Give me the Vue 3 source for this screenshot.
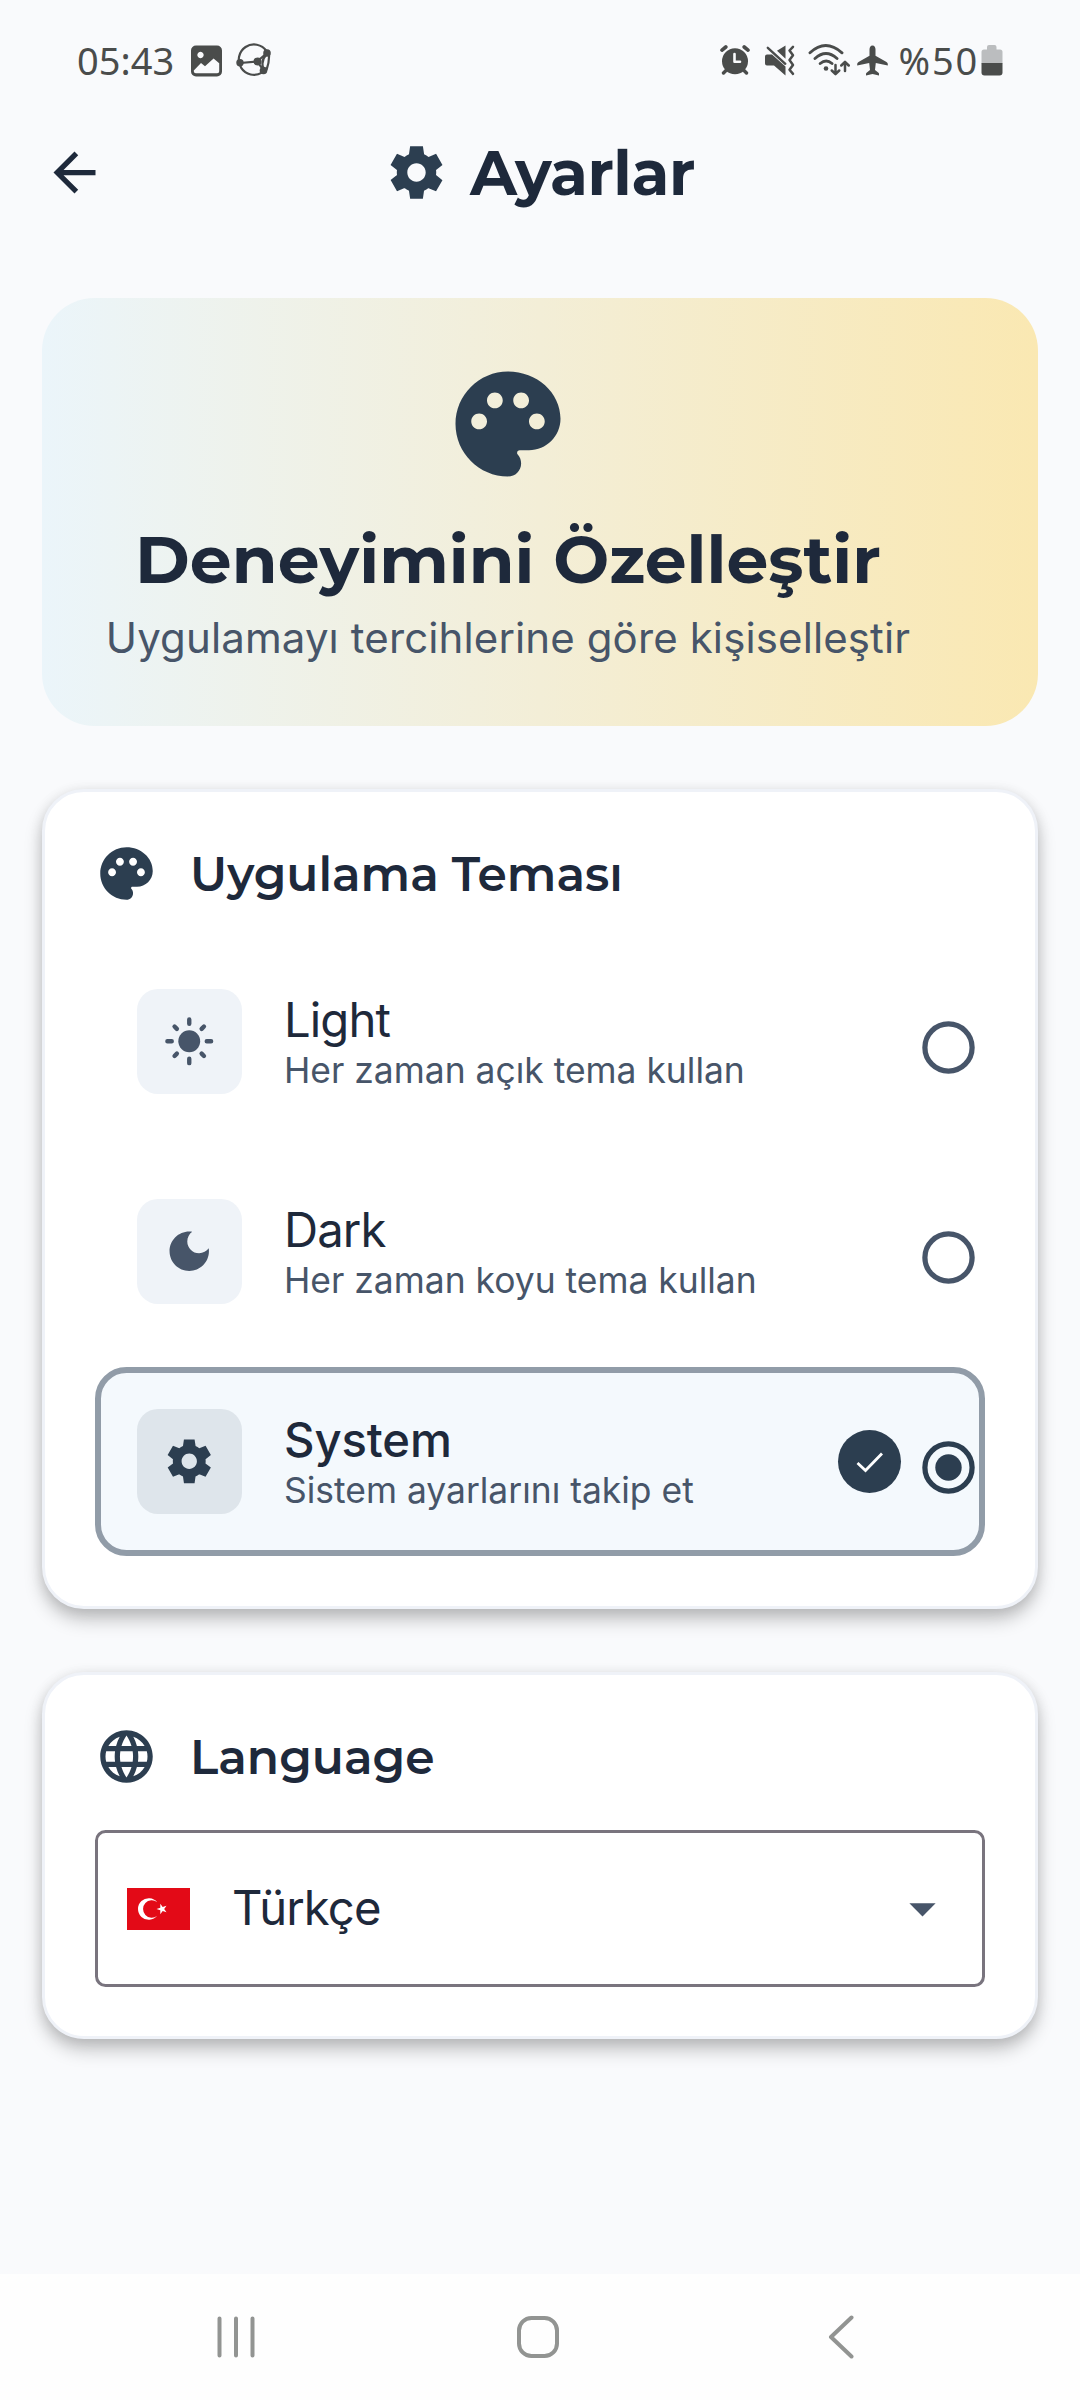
<script setup>
import { ref } from 'vue'

const selected = ref('system')
const themes = [
  { id: 'light', title: 'Light', text: 'Her zaman açık tema kullan' },
  { id: 'dark', title: 'Dark', text: 'Her zaman koyu tema kullan' },
  { id: 'system', title: 'System', text: 'Sistem ayarlarını takip et' },
]

const gear =
  'M19.44 12.99l-.01.02c.04-.33.08-.67.08-1.01 0-.34-.03-.66-.07-.99l.01.02 2.44-1.92-2.43-4.22-2.87 1.16.01.01c-.52-.4-1.09-.74-1.71-1h.01L14.44 2H9.57l-.44 3.07h.01c-.62.26-1.19.6-1.71 1l.01-.01-2.88-1.17-2.44 4.22 2.44 1.92.01-.02c-.04.33-.07.65-.07.99 0 .34.03.68.08 1.01l-.01-.02-2.43 1.91 2.43 4.2 2.88-1.15-.02-.04c.53.41 1.1.75 1.73 1.01h-.03L9.58 22h4.85l.44-3.07h-.01c.62-.26 1.2-.6 1.73-1.01l-.02.04 2.88 1.15 2.43-4.2-2.44-1.92zM12 15.5c-1.93 0-3.5-1.57-3.5-3.5s1.57-3.5 3.5-3.5 3.5 1.57 3.5 3.5-1.57 3.5-3.5 3.5z'
const palette =
  'M12 2C6.49 2 2 6.49 2 12s4.49 10 10 10c1.38 0 2.5-1.12 2.5-2.5 0-.61-.23-1.2-.64-1.67-.08-.1-.13-.21-.13-.33 0-.28.22-.5.5-.5H16c3.31 0 6-2.69 6-6 0-4.96-4.49-9-10-9zM17.5 13c-.83 0-1.5-.67-1.5-1.5s.67-1.5 1.5-1.5 1.5.67 1.5 1.5-.67 1.5-1.5 1.5zm-3-4c-.83 0-1.5-.67-1.5-1.5S13.67 6 14.5 6s1.5.67 1.5 1.5S15.33 9 14.5 9zM5 11.5c0-.83.67-1.5 1.5-1.5S8 10.67 8 11.5 7.33 13 6.5 13 5 12.33 5 11.5zm6-4C11 8.33 10.33 9 9.5 9S8 8.33 8 7.5 8.67 6 9.5 6s1.5.67 1.5 1.5z'
const moon =
  'M12 3c-4.97 0-9 4.03-9 9s4.03 9 9 9 9-4.03 9-9c0-.46-.04-.92-.1-1.36-.98 1.37-2.58 2.26-4.4 2.26-2.98 0-5.4-2.42-5.4-5.4 0-1.81.89-3.42 2.26-4.4-.44-.06-.9-.1-1.36-.1z'
const globe =
  'M11.99 2C6.47 2 2 6.48 2 12s4.47 10 9.99 10C17.52 22 22 17.52 22 12S17.52 2 11.99 2zm6.93 6h-2.95c-.32-1.25-.78-2.45-1.38-3.56 1.84.63 3.37 1.91 4.33 3.56zM12 4.04c.83 1.2 1.48 2.53 1.91 3.96h-3.82c.43-1.43 1.08-2.76 1.91-3.96zM4.26 14C4.1 13.36 4 12.69 4 12s.1-1.36.26-2h3.38c-.08.66-.14 1.32-.14 2s.06 1.34.14 2H4.26zm.82 2h2.95c.32 1.25.78 2.45 1.38 3.56-1.84-.63-3.37-1.9-4.33-3.56zm2.95-8H5.08c.96-1.66 2.49-2.93 4.33-3.56C8.81 5.55 8.35 6.75 8.03 8zM12 19.96c-.83-1.2-1.48-2.53-1.91-3.96h3.82c-.43 1.43-1.08 2.76-1.91 3.96zM14.34 14H9.66c-.09-.66-.16-1.32-.16-2s.07-1.35.16-2h4.68c.09.65.16 1.32.16 2s-.07 1.34-.16 2zm.25 5.56c.6-1.11 1.06-2.31 1.38-3.56h2.95c-.96 1.65-2.49 2.93-4.33 3.56zM16.36 14c.08-.66.14-1.32.14-2s-.06-1.34-.14-2h3.38c.16.64.26 1.31.26 2s-.1 1.36-.26 2h-3.38z'
</script>

<template>
  <div class="screen">
    <header class="status">
      <div class="status-left">
        <span class="clock">05:43</span>
        <svg class="i-picture" width="32" height="32" viewBox="0 0 32 32">
          <path fill="currentColor" fill-rule="evenodd" d="M5 .5h21a5 5 0 0 1 5 5v21a5 5 0 0 1-5 5H5a5 5 0 0 1-5-5v-21a5 5 0 0 1 5-5zM9.500 6.800a3.200 3.200 0 1 0 .01 0zM2.800 25.500v.800a2 2 0 0 0 2 2h21.400a2 2 0 0 0 2-2v-8L22.600 13.500 14 21.300 10 18z" />
        </svg>
        <svg class="i-nodes" width="36" height="34" viewBox="0 0 36 34">
          <g fill="none" stroke="currentColor" stroke-width="2.200">
            <path d="M30.500 8A15.200 15.200 0 1 0 26 29.600M33 11q.5 8-2.500 16M4 20l17-1.500L31 10M22 19.500l5.500 8M30 12q-5.500 6-2.500 14" />
          </g>
          <g fill="currentColor">
            <circle cx="4" cy="19.800" r="3.700" /><circle cx="21.500" cy="18.500" r="4" /><circle cx="31" cy="10" r="3.800" /><circle cx="27.500" cy="27.500" r="3.800" />
          </g>
        </svg>
      </div>
      <div class="status-right">
        <svg class="i-alarm" width="30" height="30" viewBox="0 0 30 30">
          <circle cx="15" cy="16.300" r="13" fill="currentColor" />
          <g fill="none" stroke="currentColor" stroke-linecap="round">
            <path stroke-width="3.600" d="M2 5.200L5.800 2M28 5.200L24.200 2" /><path stroke-width="3.400" d="M6.500 25l-3 3M23.500 25l3 3" />
          </g>
          <path fill="none" stroke="#f9fafc" stroke-width="2.600" stroke-linecap="round" stroke-linejoin="round" d="M14.500 9v7.800h5.500" />
        </svg>
        <svg class="i-mute" width="31" height="31" viewBox="0 0 31 31">
          <path fill="currentColor" d="M0 11.500q0-2 2-2h5l13.500 12v9L9 20.500H2q-2 0-2-2zM12 5.800L20.500.500v13.200z" />
          <path fill="none" stroke="currentColor" stroke-width="2.400" stroke-linecap="round" d="M2.800 2.800l17.500 16" />
          <path fill="none" stroke="currentColor" stroke-width="2.500" stroke-linecap="round" stroke-linejoin="round" d="M28 1.800l-3.500 3.700 3.500 4.800-3.500 4.800 3.500 4.800-3.500 4.800 3.500 4.200" />
        </svg>
        <svg class="i-wifi" width="42" height="32" viewBox="0 0 42 32">
          <g fill="none" stroke="currentColor" stroke-width="2.900" stroke-linecap="round">
            <path d="M2 8.800q15.500-14.500 32 0M7 14.500q11-10 22 0M12.200 19.500q6-5.200 11.800 0" />
          </g>
          <circle cx="18" cy="24.500" r="2.300" fill="currentColor" />
          <path fill="none" stroke="currentColor" stroke-width="2.500" stroke-linecap="round" stroke-linejoin="round" d="M27.500 21v8.500M23.800 26.500l3.700 3.700 3.700-3.700M37 27v-8.500M33.300 21.500l3.700-3.700 3.700 3.700" />
        </svg>
        <svg class="i-plane" width="31" height="31" viewBox="0 0 31 31">
          <path fill="currentColor" d="M15.500.500c2 0 3 1.800 3 4v6.200l11 6.300q1.300.800 1.300 2v1.500l-12-2.500-.8 7 3.500 2.800q.800.700.500 1.800v.900l-6.500-1.500L9 30.500v-.900q-.200-1.100.6-1.800l3.400-2.800-.8-7-12 2.500V19q0-1.200 1.300-2l11-6.300V4.500c0-2.200 1-4 3-4z" />
        </svg>
        <span class="percent">%50</span>
        <svg class="i-battery" width="22" height="31" viewBox="0 0 22 31">
          <path fill="#bbbdbf" d="M6 2q0-2 2-2h5.500q2 0 2 2v2.500H19q2.500 0 2.500 2.500v11.500H.5V7q0-2.500 2.500-2.500h3z" />
          <path fill="currentColor" d="M.5 18h21v9.500q0 3-3 3h-15q-3 0-3-3z" />
        </svg>
      </div>
    </header>

    <nav class="appbar">
      <svg class="back" viewBox="0 0 24 24"><path d="M20 11H7.830l5.590-5.590L12 4l-8 8 8 8 1.410-1.410L7.830 13H20v-2z" fill="currentColor" /></svg>
      <div class="heading">
        <svg class="ico63" viewBox="0 0 24 24"><path :d="gear" fill="currentColor" /></svg>
        <h1>Ayarlar</h1>
      </div>
    </nav>

    <main>
      <section class="banner">
        <div class="banner-inner">
          <svg class="ico126" viewBox="0 0 24 24"><path :d="palette" fill="currentColor" /></svg>
          <h2>Deneyimini Özelleştir</h2>
          <p>Uygulamayı tercihlerine göre kişiselleştir</p>
        </div>
      </section>

      <section class="card themes">
        <div class="card-head">
          <svg class="ico63" viewBox="0 0 24 24"><path :d="palette" fill="currentColor" /></svg>
          <h3>Uygulama Teması</h3>
        </div>
        <div class="options">
          <div v-for="t in themes" :key="t.id" class="option" :class="{ selected: t.id === selected }" @click="selected = t.id">
            <span class="tile">
              <svg viewBox="0 0 24 24">
                <template v-if="t.id === 'light'">
                  <circle cx="12" cy="12" r="5" fill="currentColor" />
                  <path d="M12 2v2M12 20v2M2 12h2M20 12h2M5.280 5.280l1.060 1.060M17.660 17.660l1.060 1.060M5.280 18.720l1.060-1.060M17.660 6.340l1.060-1.060" stroke="currentColor" stroke-width="2" stroke-linecap="round" />
                </template>
                <path v-else :d="t.id === 'dark' ? moon : gear" fill="currentColor" />
              </svg>
            </span>
            <div class="labels">
              <div class="name">{{ t.title }}</div>
              <div class="desc">{{ t.text }}</div>
            </div>
            <span v-if="t.id === selected" class="check">
              <svg viewBox="0 0 63 63"><path d="M19.500 33l8 7.500L44 23.500" fill="none" stroke="#fff" stroke-width="2.800" /></svg>
            </span>
            <svg class="radio" viewBox="0 0 53 53">
              <circle cx="26.500" cy="26.500" r="23.600" fill="none" stroke="currentColor" stroke-width="5.250" />
              <circle v-if="t.id === selected" cx="26.500" cy="26.500" r="13.200" fill="currentColor" />
            </svg>
          </div>
        </div>
      </section>

      <section class="card language">
        <div class="card-head">
          <svg class="ico63" viewBox="0 0 24 24"><path :d="globe" fill="currentColor" /></svg>
          <h3>Language</h3>
        </div>
        <div class="select">
          <svg class="flag" viewBox="0 0 63 42">
            <path fill="#e30a17" d="M0 0h63v42H0z" />
            <path fill="#fff" d="M30.200 14.200a10.800 10.800 0 1 0 0 13.600 8.700 8.700 0 1 1 0-13.600z" />
            <path fill="#fff" d="M29.500 21l3.800-1.200V15.800l2.400 3.200 3.800-1.200L37.200 21l2.300 3.200-3.800-1.200-2.400 3.200v-4z" />
          </svg>
          <span class="value">Türkçe</span>
          <svg class="caret" viewBox="0 0 24 24"><path d="M7 10l5 5 5-5z" fill="currentColor" /></svg>
        </div>
      </section>
    </main>

    <footer class="sysnav">
      <svg width="38" height="44" viewBox="0 0 38 44"><path d="M2.500 3.500v37M19 3.500v37M35.500 3.500v37" /></svg>
      <svg class="home" width="44" height="44" viewBox="0 0 44 44"><rect x="3" y="3" width="38" height="38" rx="12.500" /></svg>
      <svg width="26" height="44" viewBox="0 0 26 44"><path d="M23.500 2.500L3 22l20.500 19.500" /></svg>
    </footer>
  </div>
</template>

<style>
body {
  margin: 0;
  background: #f9fafc;
}
</style>

<style scoped>
.screen {
  width: 1080px;
  height: 2400px;
  display: flex;
  flex-direction: column;
  overflow: hidden;
  background: #f9fafc;
  color: #1e293b;
  font-family: Inter, "Open Sans", sans-serif;
}
svg {
  display: block;
  flex: none;
}
h1, h2, h3, p {
  margin: 0;
  white-space: nowrap;
}
h1, h2, h3 {
  font-family: Montserrat, Inter, sans-serif;
}

/* status bar */
.status {
  height: 120px;
  padding: 0 77px;
  box-sizing: border-box;
  display: flex;
  justify-content: space-between;
  color: #4a4c4b;
  font: 400 38px/119px "Noto Sans", sans-serif;
}
.status-left, .status-right {
  display: flex;
  align-items: center;
}
.i-picture { margin: 2px 0 0 17px; }
.i-nodes { margin-left: 13px; }
.i-alarm { margin-right: 15px; }
.i-mute { margin-right: 12px; }
.i-wifi { margin-right: 7px; }
.i-plane { margin-right: 11px; }
.percent { letter-spacing: 1.8px; }
.i-battery { margin-left: 2px; }

/* app bar */
.appbar {
  height: 105px;
  display: grid;
  grid-template-columns: 106px 1fr 106px;
  align-items: center;
}
.back {
  width: 63px;
  height: 63px;
  margin-left: 43px;
}
.heading {
  display: flex;
  justify-content: center;
  align-items: center;
  gap: 22px;
}
.heading h1 {
  font-size: 61.4px;
  line-height: 80px;
  letter-spacing: -0.4px;
}
.ico63 {
  width: 63px;
  height: 63px;
  color: #2c3e50;
}

main {
  flex: 1;
  padding: 73px 42px 0;
}

/* banner */
.banner {
  height: 428px;
  box-sizing: border-box;
  padding: 63px;
  border-radius: 52.5px;
  background: linear-gradient(90deg, #ebf5fa, #f3eed7 50%, #fae8b2);
}
.banner-inner {
  width: 806px;
  display: flex;
  flex-direction: column;
  align-items: center;
}
.ico126 {
  width: 126px;
  height: 126px;
  color: #2c3e50;
}
.banner h2 {
  margin-top: 33px;
  font-size: 66.3px;
  line-height: 80px;
}
.banner p {
  margin-top: 6px;
  font-size: 42px;
  line-height: 63px;
  letter-spacing: 0.12px;
  color: #475569;
}

/* cards */
.card {
  box-sizing: border-box;
  margin-top: 63px;
  padding: 50px;
  border: 3px solid #eff2f8;
  border-radius: 42px;
  background: #fff;
  box-shadow: 0 11px 18px rgba(0, 0, 0, 0.22), 0 2px 13px rgba(0, 0, 0, 0.1);
}
.themes { height: 820px; }
.language { height: 367px; }
.card-head {
  display: flex;
  align-items: center;
  gap: 32px;
}
.card-head h3 {
  padding-top: 2px;
  font-size: 47.1px;
  font-weight: 600;
  line-height: 61px;
}
.options {
  margin-top: 42px;
  display: flex;
  flex-direction: column;
  gap: 21px;
}
.option {
  height: 189px;
  box-sizing: border-box;
  display: flex;
  align-items: center;
  padding: 0 4.5px 0 36px;
  border: 6px solid transparent;
  border-radius: 31.5px;
}
.option.selected {
  border-color: #919ca8;
  background: #f4f9fd;
}
.tile {
  width: 105px;
  height: 105px;
  flex: none;
  display: flex;
  align-items: center;
  justify-content: center;
  border-radius: 21px;
  background: #eff3f8;
  color: #475569;
}
.selected .tile {
  background: #dee5eb;
  color: #2c3e50;
}
.tile svg {
  width: 52.5px;
  height: 52.5px;
}
.labels {
  flex: 1;
  margin-left: 42px;
  padding-top: 5px;
  white-space: nowrap;
}
.name {
  font-size: 47.25px;
  line-height: 50px;
  letter-spacing: -0.9px;
}
.selected .name {
  font-weight: 500;
  letter-spacing: -0.1px;
}
.desc {
  margin-top: 3px;
  font-size: 35.44px;
  line-height: 45px;
  color: #475569;
}
.check {
  width: 63px;
  height: 63px;
  border-radius: 50%;
  background: #2c3e50;
}
.radio {
  width: 53px;
  height: 53px;
  margin: 11.5px 0 0 21px;
  color: #475569;
}
.selected .radio {
  color: #2c3e50;
}

/* language picker */
.select {
  height: 157px;
  box-sizing: border-box;
  margin-top: 42px;
  padding: 0 28px 0 29px;
  display: flex;
  align-items: center;
  border: 3px solid #79747e;
  border-radius: 10.5px;
}
.flag {
  width: 63px;
  height: 42px;
}
.value {
  flex: 1;
  margin-left: 42px;
  padding-bottom: 2px;
  font-size: 47.25px;
  line-height: 60px;
  letter-spacing: -0.9px;
}
.caret {
  width: 63px;
  height: 63px;
  color: #475569;
}

/* system navigation */
.sysnav {
  height: 126px;
  box-sizing: border-box;
  padding: 0 226px 0 217px;
  display: flex;
  align-items: center;
  justify-content: space-between;
  background: #fefefe;
}
.home {
  margin-right: 8px;
}
.sysnav svg {
  fill: none;
  stroke: #929492;
  stroke-width: 4;
  stroke-linecap: round;
  stroke-linejoin: round;
}
</style>
